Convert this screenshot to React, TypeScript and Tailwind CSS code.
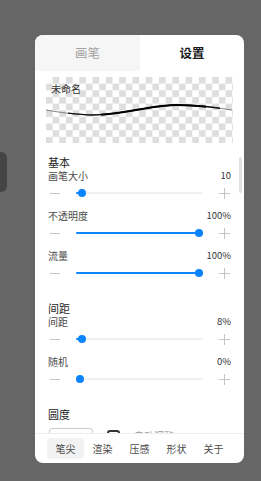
import type { ReactNode } from 'react'

const font = { fontFamily: '"Noto Sans CJK SC", "Noto Sans", sans-serif' }

interface SliderRowProps {
  label: string
  value: string
  pct: number
}

function Minus() {
  return <span className="block h-px w-[10px] bg-[#c4c4c4]" />
}

function Plus() {
  return (
    <span className="relative block h-[11px] w-[11px]">
      <span className="absolute left-0 top-[5px] h-px w-[11px] bg-[#c4c4c4]" />
      <span className="absolute left-[5px] top-0 h-[11px] w-px bg-[#c4c4c4]" />
    </span>
  )
}

function SliderRow({ label, value, pct }: SliderRowProps) {
  return (
    <div className="flex flex-col">
      <div className="flex h-[14px] items-center justify-between text-[10px] leading-none text-[#4a4a4a]">
        <span>{label}</span>
        <span className="text-[9.5px] text-[#333]">{value}</span>
      </div>
      <div className="flex h-[20px] items-center">
        <div className="flex w-[28px] shrink-0 items-center pl-[2px]">
          <Minus />
        </div>
        <div className="relative h-[8px] flex-1">
          <div className="absolute left-0 right-0 top-[3px] h-[2px] rounded-full bg-[#f0f0f0]" />
          <div
            className="absolute left-0 top-[3px] h-[2px] rounded-full bg-[#0a84ff]"
            style={{ width: `${pct * 100}%` }}
          />
          <div
            className="absolute top-0 h-[8px] w-[8px] rounded-full bg-[#0a84ff]"
            style={{ left: `calc(${pct} * (100% - 8px))` }}
          />
        </div>
        <div className="flex w-[28px] shrink-0 items-center justify-end pr-px">
          <Plus />
        </div>
      </div>
    </div>
  )
}

function Section({ title, children }: { title: string; children: ReactNode }) {
  return (
    <div className="flex flex-col">
      <div className="flex h-[14px] items-center text-[11px] leading-none text-[#1e1e1e]">{title}</div>
      <div className="flex flex-col gap-[6px]">{children}</div>
    </div>
  )
}

const curve = 'M0 33 C12 35 30 38 47 38 C62 38 77 35 90 33 C100 31.5 115 28 131 28 C145 28 160 29 186 33'

export default function App() {
  const tabs = ['笔尖', '渲染', '压感', '形状', '关于']
  return (
    <div className="relative h-[481px] w-[261px] overflow-hidden bg-[#666666] pl-[35px] pt-[35px]" style={font}>
      <div className="absolute left-0 top-[152px] h-[40px] w-[7px] rounded-r-md bg-[#444444]" />
      <div className="relative flex h-[428px] w-[209px] flex-col overflow-hidden rounded-[8px] bg-white">
        <div className="flex h-[36px] shrink-0">
          <div className="flex w-[105px] items-center justify-center bg-[#f6f6f6] text-[12.5px] text-[#a0a0a0]">画笔</div>
          <div className="flex flex-1 items-center justify-center text-[12.5px] font-bold text-[#1a1a1a]">设置</div>
        </div>

        <div className="relative flex-1 overflow-hidden">
          <div className="flex flex-col pt-[6px]">
            <div className="relative mx-[11px] h-[66px] bg-white bg-[conic-gradient(#dedede_25%,#ffffff_0_50%,#dedede_0_75%,#ffffff_0)] bg-size-[13.3px_13.3px]">
              <span className="absolute left-[5px] top-[7px] text-[10px] leading-none text-[#333]">未命名</span>
              <svg className="absolute left-0 top-0" width="186" height="66" viewBox="0 0 186 66">
                <defs>
                  <clipPath id="mid">
                    <rect x="22" y="0" width="152" height="66" />
                  </clipPath>
                  <clipPath id="core">
                    <rect x="55" y="0" width="105" height="66" />
                  </clipPath>
                </defs>
                <path d={curve} fill="none" stroke="#555" strokeWidth="0.7" />
                <path d={curve} fill="none" stroke="#111" strokeWidth="1.3" clipPath="url(#mid)" />
                <path d={curve} fill="none" stroke="#000" strokeWidth="2" clipPath="url(#core)" />
              </svg>
            </div>

            <div className="flex flex-col gap-[18px] px-[13px] pt-[12px]">
              <Section title="基本">
                <SliderRow label="画笔大小" value="10" pct={0.02} />
                <SliderRow label="不透明度" value="100%" pct={1} />
                <SliderRow label="流量" value="100%" pct={1} />
              </Section>
              <Section title="间距">
                <SliderRow label="间距" value="8%" pct={0.02} />
                <SliderRow label="随机" value="0%" pct={0} />
              </Section>
              <div className="flex flex-col">
                <div className="flex h-[14px] items-center text-[11px] leading-none text-[#1e1e1e]">圆度</div>
                <div className="mt-[7px] flex items-start gap-[14px] pl-px">
                  <div className="h-[24px] w-[44px] rounded-[3px] border border-[#cccccc]" />
                  <div className="mt-[2px] h-[13px] w-[13px] rounded-[3px] border-2 border-[#333]" />
                  <span className="mt-[3px] text-[10px] leading-none text-[#999]">自动调整</span>
                </div>
              </div>
            </div>
          </div>
          <div className="absolute right-[2px] top-[86px] h-[36px] w-[3px] rounded-full bg-[#e2e2e2]" />
        </div>

        <div className="flex h-[30px] shrink-0 items-center border-t border-[#eeeeee] px-[12px]">
          {tabs.map((t, i) => (
            <div
              key={t}
              className={`flex h-[21px] w-[37px] items-center justify-center rounded-[4px] text-[10px] text-[#4a4a4a] ${
                i === 0 ? 'bg-[#f2f2f2]' : ''
              }`}
            >
              {t}
            </div>
          ))}
        </div>
      </div>
    </div>
  )
}
